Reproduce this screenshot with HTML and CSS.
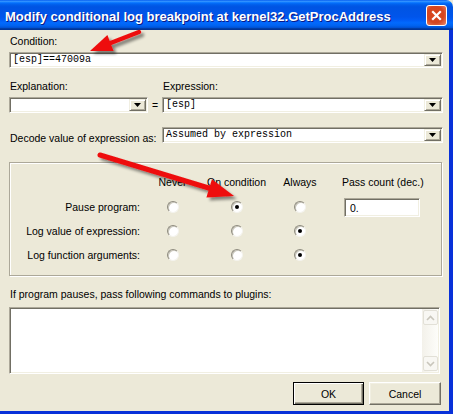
FILE: index.html
```html
<!DOCTYPE html>
<html>
<head>
<meta charset="utf-8">
<link rel="stylesheet" href="styles.css">
</head>
<body>
<div class="window">
  <div class="titlebar">
    <span class="title">Modify conditional log breakpoint at kernel32.GetProcAddress</span>
    <span class="close"><svg width="13" height="13" viewBox="0 0 13 13"><path d="M3 3 L10 10 M10 3 L3 10" stroke="#fff" stroke-width="2.2" stroke-linecap="square"/></svg></span>
  </div>
  <div class="client">
    <div class="label">Condition:</div>
    <div class="combo cond"><span class="val">[esp]==47009a</span><span class="dd"></span></div>
    <div class="row2">
      <div class="expl">
        <div class="label">Explanation:</div>
        <div class="combo"><span class="val"></span><span class="dd"></span></div>
      </div>
      <div class="eq">=</div>
      <div class="expr">
        <div class="label">Expression:</div>
        <div class="combo"><span class="val">[esp]</span><span class="dd"></span></div>
      </div>
    </div>
    <div class="decode">
      <span class="label dlabel">Decode value of expression as:</span>
      <div class="combo wide"><span class="val">Assumed by expression</span><span class="dd"></span></div>
    </div>
    <div class="group">
      <div></div>
      <div class="hd">Never</div>
      <div class="hd">On condition</div>
      <div class="hd">Always</div>
      <div class="hd pc">Pass count (dec.)</div>

      <div class="rl">Pause program:</div>
      <div class="rc"><span class="radio"></span></div>
      <div class="rc"><span class="radio on"></span></div>
      <div class="rc"><span class="radio"></span></div>
      <div class="ec"><div class="edit">0.</div></div>

      <div class="rl">Log value of expression:</div>
      <div class="rc"><span class="radio"></span></div>
      <div class="rc"><span class="radio"></span></div>
      <div class="rc"><span class="radio on"></span></div>
      <div></div>

      <div class="rl">Log function arguments:</div>
      <div class="rc"><span class="radio"></span></div>
      <div class="rc"><span class="radio"></span></div>
      <div class="rc"><span class="radio on"></span></div>
      <div></div>
    </div>
    <div class="label blabel">If program pauses, pass following commands to plugins:</div>
    <div class="memo">
      <div class="sb">
        <span class="sbtn"><svg width="9" height="6" viewBox="0 0 9 6"><path d="M1 5 L4.5 1.5 L8 5" fill="none" stroke="#C9C6BC" stroke-width="1.6"/></svg></span>
        <span class="sbtn"><svg width="9" height="6" viewBox="0 0 9 6"><path d="M1 1 L4.5 4.5 L8 1" fill="none" stroke="#C9C6BC" stroke-width="1.6"/></svg></span>
      </div>
    </div>
    <div class="buttons">
      <button class="btn ok">OK</button>
      <button class="btn">Cancel</button>
    </div>
  </div>
  <svg class="arrows" width="453" height="414" viewBox="0 0 453 414">
    <defs>
      <filter id="sh" x="-30%" y="-30%" width="160%" height="160%">
        <feGaussianBlur in="SourceAlpha" stdDeviation="1.6"/>
        <feOffset dx="3" dy="3" result="b"/>
        <feComponentTransfer><feFuncA type="linear" slope="0.45"/></feComponentTransfer>
        <feMerge><feMergeNode/><feMergeNode in="SourceGraphic"/></feMerge>
      </filter>
    </defs>
    <g filter="url(#sh)">
      <line x1="139" y1="32" x2="108" y2="44" stroke="#EE1010" stroke-width="4.5" stroke-linecap="round"/>
      <polygon points="90,51 113.6,51 107.4,35.1" fill="#EE1010"/>
    </g>
    <g filter="url(#sh)">
      <line x1="100" y1="155" x2="212" y2="189" stroke="#EE1010" stroke-width="5" stroke-linecap="round"/>
      <polygon points="234,196 206.4,197.5 211.9,179.3" fill="#EE1010"/>
    </g>
  </svg>
</div>
</body>
</html>
```
FILE: styles.css
```css
* { box-sizing: border-box; }
html, body { margin: 0; padding: 0; }
body {
  width: 453px;
  height: 414px;
  overflow: hidden;
  background: #ECE9D8;
  font-family: "Liberation Sans", Arial, sans-serif;
  font-size: 10.5px;
  color: #000;
}
.window {
  position: relative;
  width: 453px;
  height: 414px;
  display: flex;
  flex-direction: column;
}
.titlebar {
  height: 30px;
  flex: none;
  display: flex;
  align-items: center;
  justify-content: space-between;
  padding: 2px 6px 0 5px;
  border-top-right-radius: 7px;
  background: linear-gradient(180deg, #0058EE 0%, #3593FF 4%, #288EFF 6%, #127DFF 8%, #036FFC 10%, #0262EE 14%, #0057E5 20%, #0054E3 24%, #0055EB 56%, #005BF5 66%, #026AFE 76%, #0062EF 86%, #0052D6 92%, #0040AB 94%, #003092 100%);
}
.title {
  color: #fff;
  font-weight: bold;
  font-size: 13px;
  text-shadow: 1px 1px #0A1883;
  white-space: nowrap;
}
.close {
  width: 21px;
  height: 21px;
  margin-top: -1px;
  border: 1px solid #fff;
  border-radius: 3px;
  display: flex;
  align-items: center;
  justify-content: center;
  background: radial-gradient(circle at 45% 45%, #D9481F 0%, #D54520 55%, #EB8A6C 100%);
}
.client {
  flex: 1;
  background: #ECE9D8;
  border-right: 4px solid #0831D9;
  border-bottom: 3px solid #0831D9;
  padding: 5px 0 0 9px;
}
.label {
  height: 13px;
  line-height: 13px;
  padding-left: 1px;
  white-space: nowrap;
}
.combo {
  height: 16px;
  margin-top: 4px;
  display: flex;
  align-items: center;
  background: #fff;
  border: 1px solid;
  border-color: #ACA899 #fff #fff #ACA899;
  box-shadow: inset 1px 1px #716F64, inset -1px -1px #F1EFE2;
  padding: 1px;
}
.cond { width: 434px; }
.val {
  font-family: "Liberation Mono", "DejaVu Sans Mono", monospace;
  font-size: 10px;
  line-height: 12px;
  padding-left: 2px;
  white-space: nowrap;
}
.dd {
  margin-left: auto;
  width: 17px;
  height: 12px;
  flex: none;
  display: flex;
  align-items: center;
  justify-content: center;
  background: #ECE9D8;
  border: 1px solid;
  border-color: #F1EFE2 #716F64 #716F64 #F1EFE2;
  box-shadow: inset 1px 1px #fff, inset -1px -1px #ACA899;
}
.dd::after {
  content: "";
  width: 7px;
  height: 4px;
  background: #000;
  clip-path: polygon(0 0, 100% 0, 50% 100%);
}
.row2 {
  display: flex;
  align-items: flex-end;
  margin-top: 12px;
}
.expl { width: 139px; }
.eq {
  width: 14px;
  height: 16px;
  line-height: 16px;
  text-align: center;
}
.expr { width: 281px; }
.decode {
  display: flex;
  align-items: center;
  margin-top: 14px;
}
.dlabel { width: 153px; padding-top: 3px; }
.decode .combo { margin-top: 0; }
.wide { width: 281px; }
.group {
  margin-top: 19px;
  width: 433px;
  height: 114px;
  border: 1px solid #ACA899;
  box-shadow: inset 1px 1px #fff, 1px 1px #fff;
  padding-top: 13px;
  display: grid;
  grid-template-columns: 135px 55px 73px 54px 1fr;
  grid-template-rows: 19px 24px 24px 24px;
}
.hd {
  align-self: start;
  line-height: 13px;
  text-align: center;
  white-space: nowrap;
}
.hd.pc { text-align: left; padding-left: 15px; }
.rl {
  align-self: center;
  line-height: 13px;
  text-align: right;
  padding-right: 5px;
  white-space: nowrap;
}
.rc {
  display: flex;
  align-items: center;
  justify-content: center;
}
.radio {
  position: relative;
  width: 12px;
  height: 12px;
  border-radius: 50%;
  background: #fff;
  border: 1px solid;
  border-color: #8E8B7E #F4F3EE #F4F3EE #8E8B7E;
  box-shadow: inset 1px 1px #C9C6BA;
}
.radio.on::after {
  content: "";
  position: absolute;
  left: 3px;
  top: 3px;
  width: 4px;
  height: 4px;
  border-radius: 50%;
  background: #000;
}
.ec {
  display: flex;
  align-items: center;
  padding-left: 17px;
}
.edit {
  width: 76px;
  height: 19px;
  background: #fff;
  border: 1px solid;
  border-color: #ACA899 #fff #fff #ACA899;
  box-shadow: inset 1px 1px #716F64, inset -1px -1px #F1EFE2;
  padding: 3px 0 0 5px;
  line-height: 13px;
}
.blabel { margin-top: 12px; }
.memo {
  margin-top: 6px;
  width: 431px;
  height: 67px;
  background: #fff;
  border: 1px solid;
  border-color: #ACA899 #fff #fff #ACA899;
  box-shadow: inset 1px 1px #716F64, inset -1px -1px #F1EFE2;
  padding: 1px;
  display: flex;
  justify-content: flex-end;
}
.sb {
  width: 16px;
  display: flex;
  flex-direction: column;
  justify-content: space-between;
  padding: 1px 0;
  background: linear-gradient(90deg, #F3F1EA, #FDFDFA);
}
.sbtn {
  width: 15px;
  height: 15px;
  margin-left: 1px;
  display: flex;
  align-items: center;
  justify-content: center;
  border: 1px solid #E2E0D7;
  border-radius: 2px;
  background: #F8F7F3;
}
.buttons {
  margin-top: 8px;
  width: 432px;
  display: flex;
  justify-content: flex-end;
  gap: 5px;
}
.btn {
  width: 72px;
  height: 23px;
  padding: 0;
  font-family: "Liberation Sans", Arial, sans-serif;
  font-size: 10.5px;
  color: #000;
  background: #ECE9D8;
  border: 1px solid;
  border-color: #fff #716F64 #716F64 #fff;
  box-shadow: inset -1px -1px #ACA899, inset 1px 1px #F1EFE2;
}
.btn.ok {
  width: 71px;
  border: 1px solid #000;
  box-shadow: inset 1px 1px #fff, inset -1px -1px #716F64, inset -2px -2px #ACA899;
}
.arrows {
  position: absolute;
  left: 0;
  top: 0;
  pointer-events: none;
}
```
